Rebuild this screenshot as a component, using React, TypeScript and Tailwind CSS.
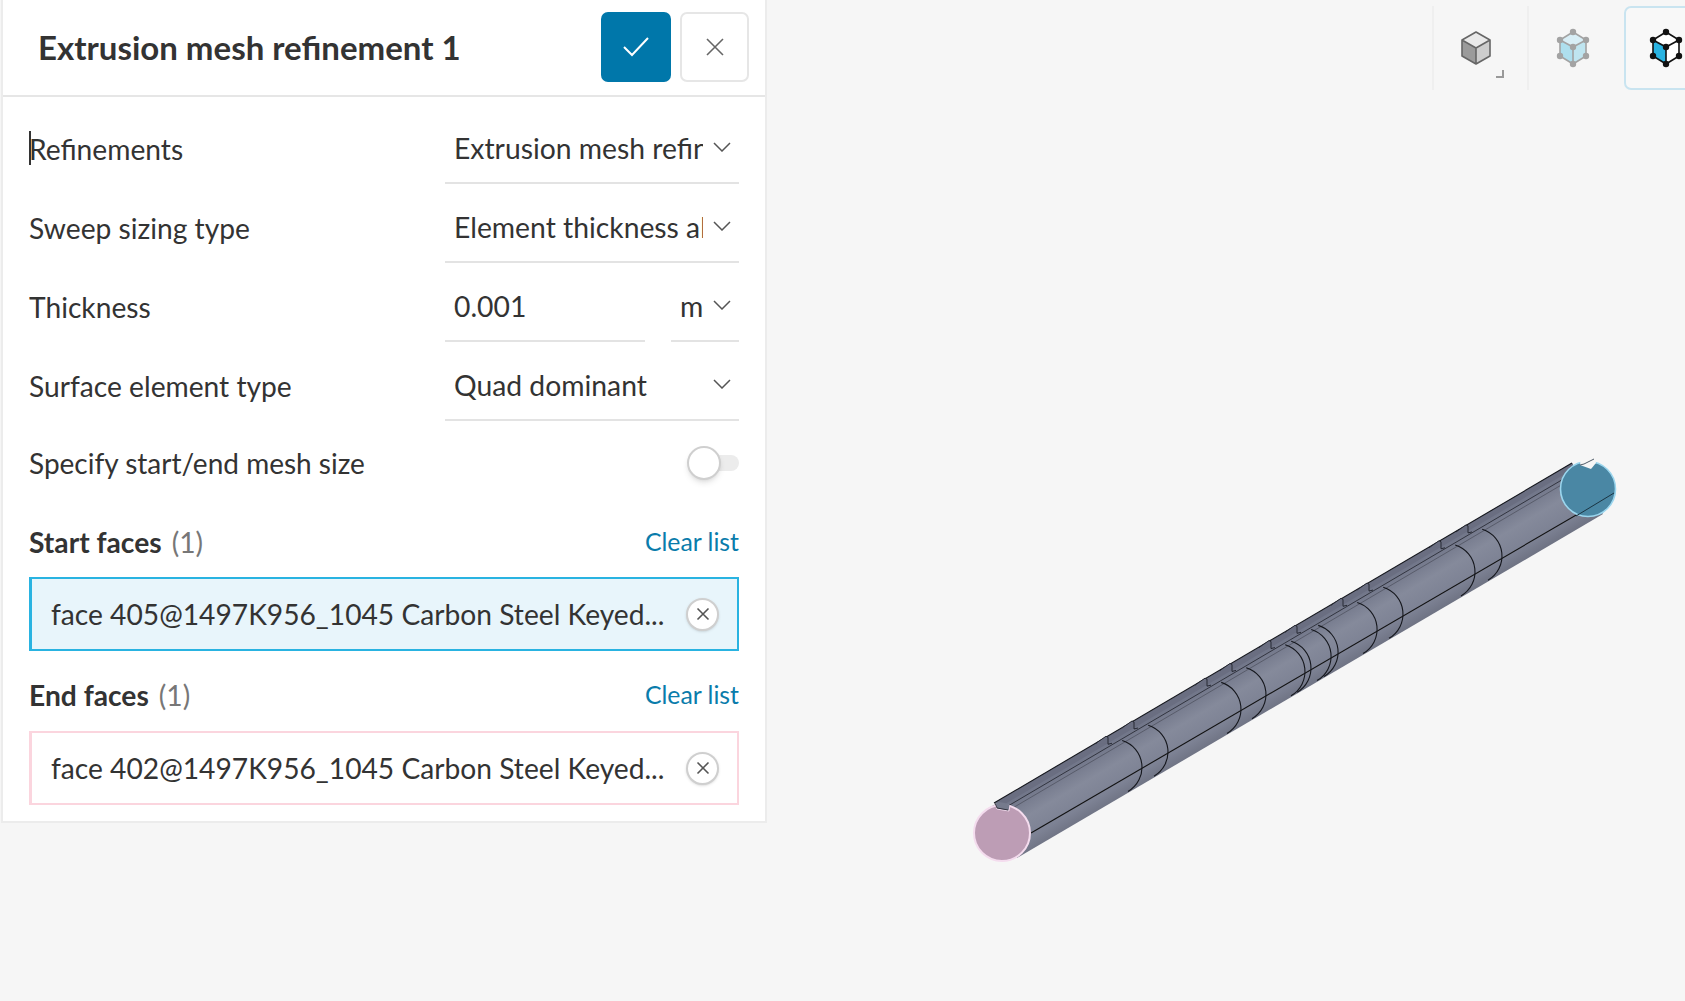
import React from "react";

const Chevron = () => (
  <svg width="18" height="10" viewBox="0 0 18 10" fill="none" className="shrink-0">
    <path d="M1 1 L9 9 L17 1" stroke="#555" strokeWidth="1.5" />
  </svg>
);

const FieldRow = ({ label, children }: { label: string; children: React.ReactNode }) => (
  <div className="flex h-[79px] items-end justify-between">
    <div className="flex h-[70px] items-center text-[28.2px] text-[#333]">{label}</div>
    {children}
  </div>
);

const SelectField = ({ value }: { value: string }) => (
  <div className="flex h-[70px] w-[294px] items-center border-b-2 border-[#e3e3e3] pl-[9px] pr-[8px]">
    <div className="w-[249px] overflow-hidden whitespace-nowrap text-[28.3px] text-[#333]">{value}</div>
    <div className="ml-[10px] mb-[2px]"><Chevron /></div>
  </div>
);

const FaceBox = ({ text, tone }: { text: string; tone: "blue" | "pink" }) => (
  <div
    className={
      tone === "blue"
        ? "flex h-[74px] items-center justify-between border-2 border-l-[3px] border-[#29b3e1] bg-[#e8f5fb] pl-[19px] pr-[18px]"
        : "flex h-[74px] items-center justify-between border-2 border-l-[3px] border-[#fbd5de] bg-white pl-[19px] pr-[18px]"
    }
  >
    <span className="whitespace-nowrap text-[28.2px] text-[#333]">{text}</span>
    <span className="flex h-[33px] w-[33px] items-center justify-center rounded-full border-2 border-[#cfcfcf] bg-white shadow-sm">
      <svg width="16" height="16" viewBox="0 0 16 16" fill="none">
        <path d="M2.5 2.5 L13.5 13.5 M13.5 2.5 L2.5 13.5" stroke="#555" strokeWidth="1.6" />
      </svg>
    </span>
  </div>
);

const Heading = ({ title, className }: { title: string; className: string }) => (
  <div className={"flex h-[34px] items-center justify-between " + className}>
    <div className="text-[28.2px] text-[#333]">
      <span className="font-bold">{title}</span>
      <span className="ml-[10px] text-[#777]">(1)</span>
    </div>
    <span className="text-[24.8px] text-[#0a7cab]">Clear list</span>
  </div>
);

const Panel = () => (
  <section className="ml-[1px] w-[766px] shrink-0 self-start border-2 border-t-0 border-[#ececec] bg-white">
    <header className="flex h-[97px] items-start justify-between border-b-2 border-[#e6e6e6] pl-[35px] pr-[16px]">
      <h1 className="mt-[27px] text-[33px] font-bold leading-[40px] text-[#333]">Extrusion mesh refinement 1</h1>
      <div className="mt-[12px] flex gap-[9px]">
        <button className="flex h-[70px] w-[70px] items-center justify-center rounded-[7px] bg-[#0077aa]">
          <svg width="28" height="22" viewBox="0 0 28 22" fill="none">
            <path d="M2 11 L10 19 L26 2" stroke="#fff" strokeWidth="2" />
          </svg>
        </button>
        <button className="flex h-[70px] w-[69px] items-center justify-center rounded-[7px] border-2 border-[#e6e6e6] bg-white">
          <svg width="20" height="20" viewBox="0 0 20 20" fill="none">
            <path d="M2 2 L18 18 M18 2 L2 18" stroke="#666" strokeWidth="1.6" />
          </svg>
        </button>
      </div>
    </header>
    <div className="px-[26px] pb-[16px] pt-[8px]">
      <div className="relative">
        <div className="absolute left-0 top-[26px] h-[34px] w-[2px] bg-[#333]" />
        <FieldRow label="Refinements"><SelectField value="Extrusion mesh refinement 1" /></FieldRow>
      </div>
      <FieldRow label="Sweep sizing type"><SelectField value="Element thickness along sweep" /></FieldRow>
      <FieldRow label="Thickness">
        <div className="flex gap-[26px]">
          <div className="flex h-[70px] w-[200px] items-center border-b-2 border-[#e3e3e3] pl-[9px] text-[28.3px] text-[#333]">0.001</div>
          <div className="flex h-[70px] w-[68px] items-center justify-between border-b-2 border-[#e3e3e3] pl-[9px] pr-[8px] text-[28.3px] text-[#333]">
            <span>m</span>
            <span className="mb-[2px]"><Chevron /></span>
          </div>
        </div>
      </FieldRow>
      <FieldRow label="Surface element type"><SelectField value="Quad dominant" /></FieldRow>
      <div className="flex h-[84px] items-center justify-between">
        <span className="text-[28px] text-[#333]">Specify start/end mesh size</span>
        <div className="relative h-[16px] w-[52px]">
          <div className="absolute right-0 top-0 h-[16px] w-[30px] rounded-full bg-[#ececec]" />
          <div className="absolute left-0 top-[-9px] h-[34px] w-[34px] rounded-full border-2 border-[#cfcfcf] bg-white shadow-md" />
        </div>
      </div>
      <Heading title="Start faces" className="mb-[18px] mt-[20px]" />
      <FaceBox tone="blue" text="face 405@1497K956_1045 Carbon Steel Keyed..." />
      <Heading title="End faces" className="mb-[19px] mt-[27px]" />
      <FaceBox tone="pink" text="face 402@1497K956_1045 Carbon Steel Keyed..." />
    </div>
  </section>
);

const CubeSolid = () => (
  <svg width="36" height="38" viewBox="0 0 36 38" fill="none">
    <path d="M18 3 L32 11 L18 19 L4 11 Z" fill="#e9e9e9" />
    <path d="M4 11 L18 19 L18 35 L4 27 Z" fill="#9b9b9b" />
    <path d="M32 11 L18 19 L18 35 L32 27 Z" fill="#cdcdcd" />
    <path d="M18 3 L32 11 L32 27 L18 35 L4 27 L4 11 Z M4 11 L18 19 L32 11 M18 19 L18 35" stroke="#666" strokeWidth="1.6" strokeLinejoin="round" />
  </svg>
);

const CubeNodes = ({ top, left, right, line, node }: { top: string; left: string; right: string; line: string; node: string }) => {
  const pts: [number, number][] = [[19, 4], [32, 12], [32, 28], [19, 36], [6, 28], [6, 12], [19, 19]];
  return (
    <svg width="38" height="40" viewBox="0 0 38 40" fill="none">
      <path d="M19 4 L32 12 L19 19 L6 12 Z" fill={top} />
      <path d="M6 12 L19 19 L19 36 L6 28 Z" fill={left} />
      <path d="M32 12 L19 19 L19 36 L32 28 Z" fill={right} />
      <path d="M19 4 L32 12 L32 28 L19 36 L6 28 L6 12 Z M6 12 L19 19 L32 12 M19 19 L19 36" stroke={line} strokeWidth="1.6" />
      {pts.map(([x, y]) => (
        <circle key={x + "-" + y} cx={x} cy={y} r="3.2" fill={node} />
      ))}
    </svg>
  );
};

const Toolbar = () => (
  <div className="absolute left-[665px] top-[6px] flex">
    <div className="relative flex h-[84px] w-[97px] items-center justify-center border-x-2 border-[#efefef] pr-[10px]">
      <CubeSolid />
      <div className="absolute left-[62px] top-[64px] h-[8px] w-[8px] border-b-2 border-r-2 border-[#999]" />
    </div>
    <div className="flex h-[84px] w-[95px] items-center justify-center pr-[8px]">
      <CubeNodes top="#d8eef6" left="#aedfee" right="#bfe5f0" line="#a3a3a3" node="#a3a3a3" />
    </div>
    <div className="flex h-[84px] w-[96px] items-center justify-center rounded-[7px] border-2 border-[#c9e4f0] bg-[#f8f8f8] pr-[12px]">
      <CubeNodes top="#ffffff" left="#29b3e1" right="#ffffff" line="#111" node="#111" />
    </div>
  </div>
);

const axisY = (x: number) => 833 - (x - 1003) * 0.587;
const rings = [1115, 1141, 1214, 1239, 1278, 1284, 1304, 1311, 1350, 1376, 1448, 1475];
const notches = [1115, 1141, 1214, 1239, 1278, 1304, 1350, 1376, 1448, 1475];
const R = 28;
const polar = (cx: number, cy: number, deg: number) => {
  const a = (deg * Math.PI) / 180;
  return `${(cx + R * Math.cos(a)).toFixed(1)} ${(cy + R * Math.sin(a)).toFixed(1)}`;
};

const Shaft = () => (
  <svg className="block h-full w-full" viewBox="768 0 917 1001" preserveAspectRatio="xMinYMin meet">
    <defs>
      <linearGradient id="body" gradientUnits="userSpaceOnUse" x1="1290" y1="638" x2="1319" y2="687">
        <stop offset="0" stopColor="#72778a" />
        <stop offset="0.35" stopColor="#858a9b" />
        <stop offset="0.7" stopColor="#7d8294" />
        <stop offset="1" stopColor="#6a6e7e" />
      </linearGradient>
    </defs>
    <polygon points="988,809 1573,463 1604,514 1018,858" fill="url(#body)" />
    <polygon points="995,803 1573,463 1576,468 1006,804" fill="#6a6e81" />
    <path d="M995 803 L1573 463" stroke="#15171d" strokeWidth="1.1" />
    <path d="M1009 806 L1578 471" stroke="#2a2d37" strokeWidth="0.9" />
    <path d="M1012 809 L1581 474" stroke="#4a4d5a" strokeWidth="0.7" />
    <path d="M1032 833 L1615 493" stroke="#111" strokeWidth="1.1" />
    {rings.map((cx) => {
      const cy = axisY(cx);
      return (
        <path
          key={cx}
          d={`M${polar(cx, cy, -73)} A${R} ${R} 0 0 1 ${polar(cx, cy, 60)}`}
          stroke="#15171d"
          strokeWidth="1.1"
          fill="none"
        />
      );
    })}
    {notches.map((cx) => {
      const x = cx - 6;
      const y = axisY(cx) - 27;
      return (
        <path key={cx} d={`M${x - 12} ${y + 3} L${x - 2} ${y - 4} L${x} ${y - 3} L${x} ${y + 4} L${x + 4} ${y + 3}`} stroke="#1f212a" strokeWidth="0.9" fill="#6a6e81" />
      );
    })}
    <circle cx="1003" cy="833" r="28" fill="#bd9db5" stroke="#f4dcee" strokeWidth="2" />
    <path d="M996 804 L998 809 L1010 811 L1011 805 L1006 803 L1000 802 Z" fill="#757a8c" />
    <path d="M996 804 L998 809 L1010 811 L1011 805" stroke="#f4dcee" strokeWidth="1" fill="none" />
    <path d="M996 803 L998 808 L1009 810" stroke="#1c1e26" strokeWidth="0.8" fill="none" />
    <circle cx="1589" cy="489" r="27.5" fill="#4a87a4" stroke="#9bd6ee" strokeWidth="1.6" />
    <path d="M1577 516 L1615 493" stroke="#1a3442" strokeWidth="1" />
    <path d="M1582 456 L1581 465 L1592 469 L1597 463 L1596 458 L1590 456 Z" fill="#f6f6f6" />
    <path d="M1581 465 L1585 464 L1595 459" stroke="#3c4a58" strokeWidth="0.9" fill="none" />
  </svg>
);

export default function App() {
  return (
    <div className="flex h-[1001px] w-full overflow-hidden bg-[#f6f6f6] font-['Lato',sans-serif]">
      <Panel />
      <main className="relative min-w-0 flex-1 overflow-hidden">
        <Shaft />
        <Toolbar />
      </main>
    </div>
  );
}
